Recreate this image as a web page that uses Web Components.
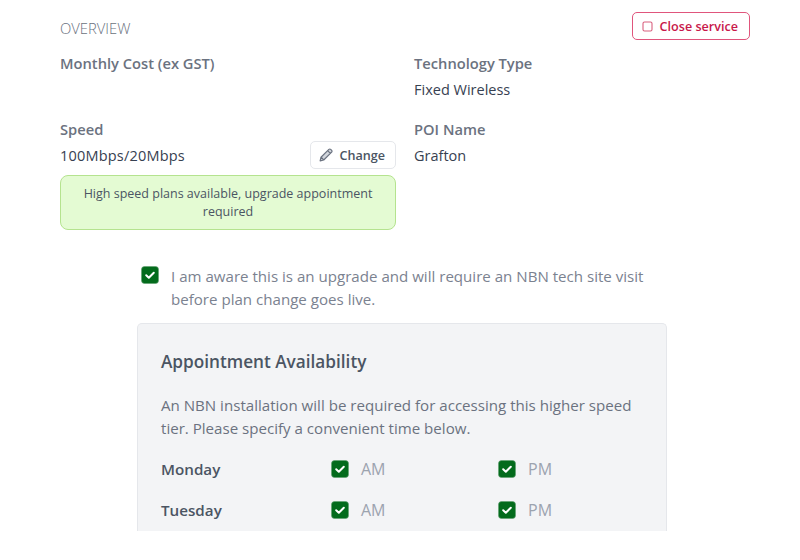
<!DOCTYPE html>
<html>
<head>
<meta charset="utf-8">
<style>
html,body{margin:0;background:#fff;}
body{font-family:"Open Sans","Noto Sans",sans-serif;height:560px;overflow:hidden;}
</style>
</head>
<body>
<service-page></service-page>
<script>
const checkIcon = `<svg viewBox="0 0 18 18" width="18" height="18"><rect x=".5" y=".5" width="17" height="17" rx="3" fill="#036b1c" stroke="#5f9f6e" stroke-width=".6"/><path d="M5.2 9.2l2.6 2.5 5-5" fill="none" stroke="#fff" stroke-width="2" stroke-linecap="round" stroke-linejoin="round"/></svg>`;

class InfoField extends HTMLElement {
  constructor() {
    super();
    this.attachShadow({ mode: "open" }).innerHTML = `
    <style>
    :host{display:block;}
    .label{font-size:14.7px;line-height:20px;font-weight:600;color:#6b7280;}
    .value{font-size:14.5px;line-height:20px;color:#374151;margin-top:7px;min-height:20px;}
    </style>
    <div class="label">${this.getAttribute("label")}</div>
    <div class="value"><slot></slot></div>`;
  }
}
customElements.define("info-field", InfoField);

class GhostButton extends HTMLElement {
  constructor() {
    super();
    this.attachShadow({ mode: "open" }).innerHTML = `
    <style>
    :host{display:inline-flex;align-items:center;gap:5px;box-sizing:border-box;background:#fff;border:1px solid #e5e7eb;border-radius:5px;height:28px;padding:0 10px 0 7px;font-size:12.6px;font-weight:600;color:#4b5563;}
    :host([danger]){border-color:#e0557c;color:#c8184a;padding:0 11px 0 9px;gap:7px;}
    svg{display:block;}
    </style>
    <slot name="icon"></slot><slot></slot>`;
  }
}
customElements.define("ghost-button", GhostButton);

class CheckRow extends HTMLElement {
  constructor() {
    super();
    this.attachShadow({ mode: "open" }).innerHTML = `
    <style>
    :host{display:flex;align-items:center;gap:12px;font-size:16px;line-height:20px;color:#9ca3af;}
    svg{display:block;flex:none;}
    </style>
    ${checkIcon}<slot></slot>`;
  }
}
customElements.define("check-row", CheckRow);

class DayRow extends HTMLElement {
  constructor() {
    super();
    this.attachShadow({ mode: "open" }).innerHTML = `
    <style>
    :host{display:grid;grid-template-columns:170px 167px 1fr;align-items:center;height:41px;}
    .day{font-size:15.2px;font-weight:600;color:#4b5563;}
    </style>
    <div class="day">${this.getAttribute("day")}</div>
    <check-row>AM</check-row>
    <check-row>PM</check-row>`;
  }
}
customElements.define("day-row", DayRow);

class AppointmentPanel extends HTMLElement {
  constructor() {
    super();
    this.attachShadow({ mode: "open" }).innerHTML = `
    <style>
    :host{display:block;box-sizing:border-box;width:530px;background:#f3f4f6;border:1px solid #e5e7eb;border-bottom:0;border-radius:5px 5px 0 0;padding:26px 23px 0;height:208px;overflow:hidden;}
    h3{margin:0;font-size:17.2px;line-height:24px;font-weight:600;color:#4b5563;}
    p{margin:20px 0 0;font-size:15.1px;line-height:23px;color:#6b7280;}
    .days{margin-top:8px;}
    </style>
    <h3>Appointment Availability</h3>
    <p>An NBN installation will be required for accessing this higher speed tier. Please specify a convenient time below.</p>
    <div class="days">
      <day-row day="Monday"></day-row>
      <day-row day="Tuesday"></day-row>
    </div>`;
  }
}
customElements.define("appointment-panel", AppointmentPanel);

class ServicePage extends HTMLElement {
  constructor() {
    super();
    this.attachShadow({ mode: "open" }).innerHTML = `
    <style>
    :host{display:block;padding:12px 50px 0 60px;}
    .top{display:flex;justify-content:space-between;align-items:flex-start;height:41px;}
    .title{font-size:14.8px;line-height:20px;font-weight:300;color:#6b7280;margin-top:6px;}
    .grid{display:grid;grid-template-columns:336px 336px;column-gap:18px;}
    .speed-line{display:flex;justify-content:space-between;align-items:center;margin-top:2px;}
    .speed-label{font-size:14.7px;line-height:20px;font-weight:600;color:#6b7280;}
    .speed-value{font-size:14.5px;line-height:20px;color:#374151;letter-spacing:.2px;margin-top:2px;}
    .notice{box-sizing:border-box;height:55px;margin-top:6px;background:#e4fbd3;border:1px solid #b5e38f;border-radius:8px;color:#4b5563;font-size:12.5px;line-height:18px;text-align:center;padding:9px 16px;}
    .row2{margin-top:19px;}
    .aware{display:flex;align-items:flex-start;gap:12px;margin:35px 0 0 81px;width:530px;font-size:15.1px;line-height:23px;color:#7b8290;}
    .aware svg{flex:none;display:block;margin-top:1px;}
    .aware span{width:490px;}
    appointment-panel{margin:12px 0 0 77px;}
    </style>
    <div class="top">
      <div class="title">OVERVIEW</div>
      <ghost-button danger>
        <svg slot="icon" width="11" height="11" viewBox="0 0 11 11"><rect x="1" y="1" width="9" height="9" rx="1.5" fill="none" stroke="#d9607f" stroke-width="1.1"/></svg>
        Close service
      </ghost-button>
    </div>
    <div class="grid">
      <info-field label="Monthly Cost (ex GST)"></info-field>
      <info-field label="Technology Type">Fixed Wireless</info-field>
      <div class="speed row2">
        <div class="speed-label">Speed</div>
        <div class="speed-line">
          <span class="speed-value">100Mbps/20Mbps</span>
          <ghost-button>
            <svg slot="icon" width="16" height="16" viewBox="0 0 15 15"><path d="M2 13l.8-3.4 7.4-7.4a1.2 1.2 0 0 1 1.7 0l.9.9a1.2 1.2 0 0 1 0 1.7l-7.4 7.4zM9 3.4l2.6 2.6M3 9.6l2.4 2.4" fill="#d1d5db" stroke="#6b7280" stroke-width="1.1" stroke-linejoin="round"/></svg>
            Change
          </ghost-button>
        </div>
        <div class="notice">High speed plans available, upgrade appointment required</div>
      </div>
      <info-field class="row2" label="POI Name">Grafton</info-field>
    </div>
    <div class="aware">${checkIcon}<span>I am aware this is an upgrade and will require an NBN tech site visit before plan change goes live.</span></div>
    <appointment-panel></appointment-panel>`;
  }
}
customElements.define("service-page", ServicePage);
</script>
</body>
</html>
